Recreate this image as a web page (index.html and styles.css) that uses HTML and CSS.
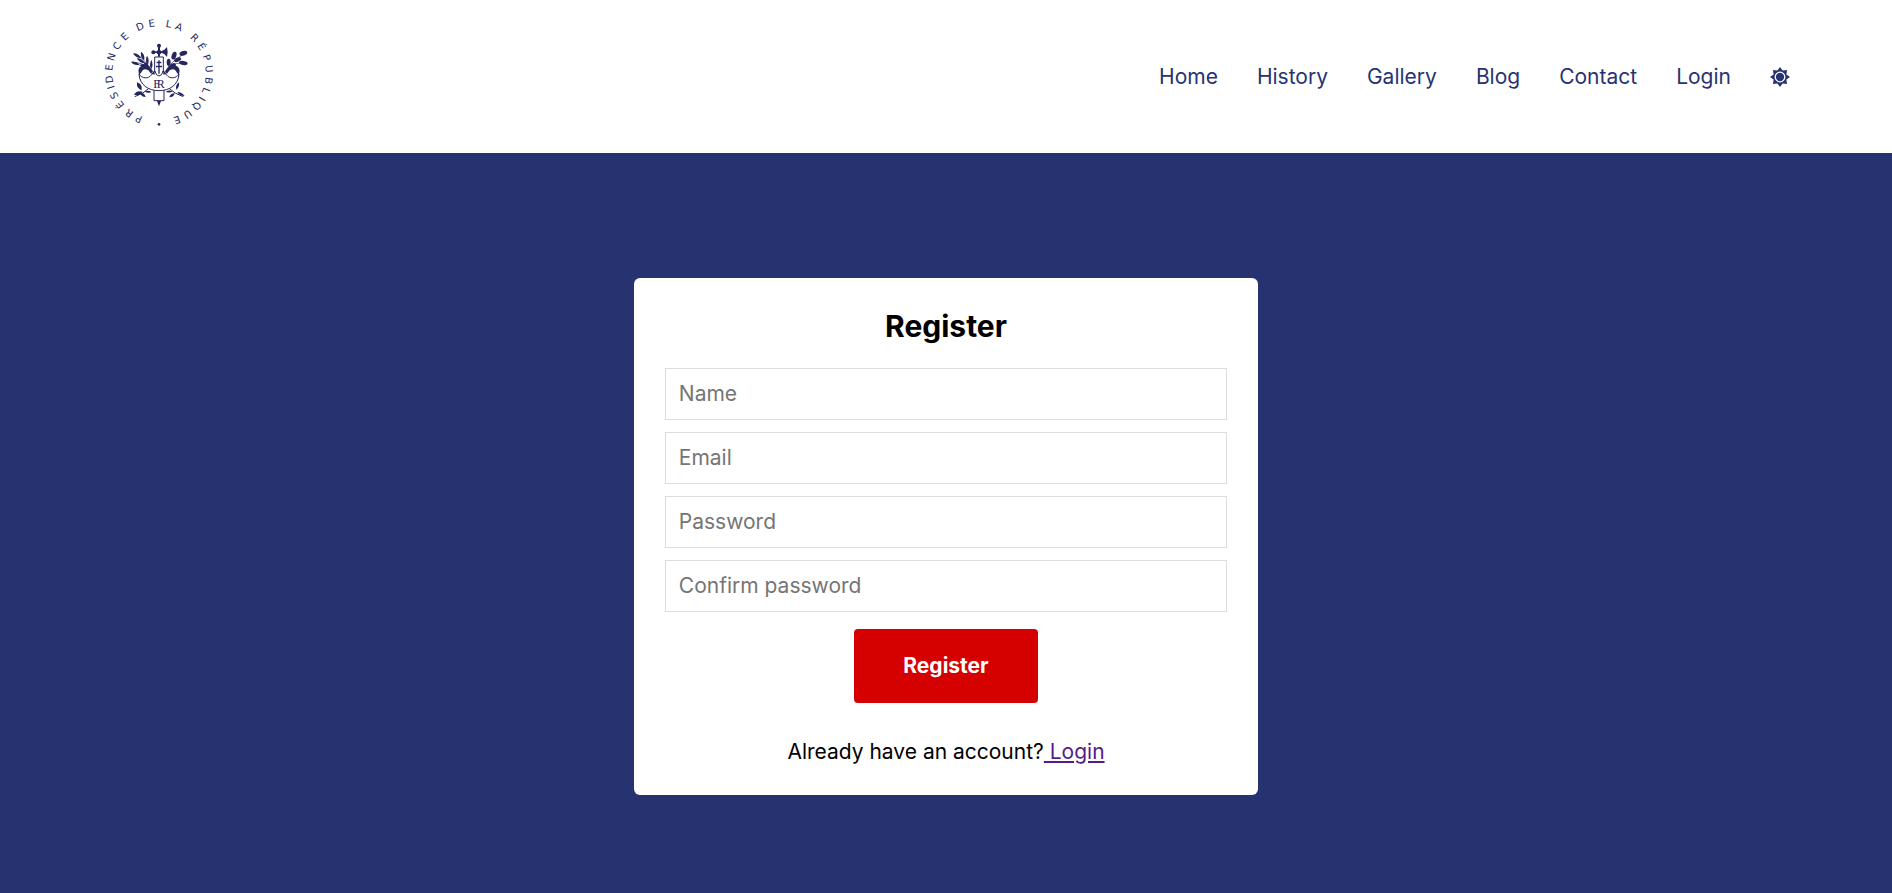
FILE: index.html
```html
<!DOCTYPE html>
<html lang="en">
<head>
<meta charset="utf-8">
<meta name="viewport" content="width=device-width, initial-scale=1">
<title>Register</title>
<link rel="stylesheet" href="styles.css">
</head>
<body>
<header class="header">
  <a class="logo" href="#" aria-label="Présidence de la République">
    <svg class="logo-mark" viewBox="36 38 342 351" fill="none" stroke="#25265e" stroke-width="3">
      <defs>
        <path id="ring" d="M207 343A140 140 0 0 1 207 63A140 140 0 0 1 207 343"/>
      </defs>
      <text class="logo-text"><textPath href="#ring"><tspan x="58 89 124 155 179 202 235 266 300 334">PRÉSIDENCE</tspan><tspan x="385 419">DE</tspan><tspan x="467 497">LA</tspan><tspan x="550 582 616 648 681 710 735 760 794 828">RÉPUBLIQUE</tspan></textPath></text>
      <circle cx="207" cy="357" r="4" fill="#25265e" stroke="none"/>
      <!-- laurel branch -->
      <path d="M137 146q35 20 49 54M126 171q30 0 52 17" stroke-width="2"/>
      <g fill="#25265e" stroke="none">
        <path d="M129 144q18 0 24 15-17-1-24-15zM153 139q14 9 9 26-12-9-9-26zM171 151q9 13 2 28-9-13-2-28zM184 163q7 15 0 28-8-12 0-28zM123 169q15-3 26 9-17 4-26-9zM140 159q17 0 25 15-16 0-25-15zM148 180q13-8 25 1-11 9-25-1zM160 169q14 4 17 16-14-2-17-16z"/>
      </g>
      <!-- oak branch -->
      <path d="M228 200q11-30 55-55M234 186q25-16 52-14" stroke-width="2"/>
      <g fill="#25265e" stroke="none">
        <ellipse cx="280" cy="144" rx="12" ry="7" transform="rotate(-18 280 144)"/>
        <ellipse cx="252" cy="151" rx="7" ry="12" transform="rotate(18 252 151)"/>
        <ellipse cx="263" cy="163" rx="11" ry="6" transform="rotate(-25 263 163)"/>
        <ellipse cx="280" cy="173" rx="13" ry="6" transform="rotate(10 280 173)"/>
        <ellipse cx="236" cy="171" rx="6" ry="11"/>
        <ellipse cx="249" cy="180" rx="9" ry="6" transform="rotate(-20 249 180)"/>
      </g>
      <!-- lower branches -->
      <path d="M134 274q26-8 44-26M280 274q-26-8-44-26" stroke-width="3"/>
      <g fill="#25265e" stroke="none">
        <path d="M141 231q17 5 14 24-17-6-14-24zM132 268q8-14 26-9-8 14-26 9zM151 262q13 0 16 13-14 0-16-13zM164 258q11-5 20 2-11 6-20-2z"/>
        <path d="M267 231q2 15-8 22-4-13 8-22zM284 272q-9-12-22-12 6 12 22 12zM254 264q-13 0-16 12 14 0 16-12zM248 258q-11-6-20 1 11 6 20-1z"/>
      </g>
      <!-- fasces -->
      <path d="M194 215v-60h26v60M192 250v36h30v-36" fill="#fff"/>
      <!-- shield -->
      <path d="M147 206c2 33 28 50 60 50s58-17 60-50c-8 14-28 15-36 4l-12-13q-3 15-12 15t-12-15l-12 13c-8 11-28 10-36-4z" fill="#fff"/>
      <path d="M184 205l10-10v13zM230 205l-10-10v13z" fill="#25265e" stroke="none"/>
      <!-- lion heads -->
      <path d="M147 208q-6-22 9-27 13-5 23 3l10 14-6 7-8-10q-14-8-19 3-2 6-9 10zM267 208q6-22-9-27-13-5-23 3l-10 14 6 7 8-10q14-8 19 3 2 6 9 10z" fill="#25265e" stroke="none"/>
      <!-- spearhead and axe -->
      <g fill="#25265e" stroke="none">
        <circle cx="207" cy="121" r="6"/>
        <path d="M204 120h6v34h-6zM190 138h34v5h-34z"/>
        <circle cx="190" cy="141" r="6"/>
        <circle cx="207" cy="141" r="7"/>
        <path d="M215 137l8-4 8-8q4 15 0 30l-8-9-8-3z"/>
        <path d="M205 165h4v40h-4zM200 169h14v5h-14zM198 181h18v5h-18z"/>
        <path d="M201 287h12l-3 8-3 8-3-8z"/>
      </g>
      <text class="monogram" x="200" y="247">F</text>
      <text class="monogram" x="212" y="247">R</text>
    </svg>
  </a>
  <nav class="nav">
    <a href="#">Home</a>
    <a href="#">History</a>
    <a href="#">Gallery</a>
    <a href="#">Blog</a>
    <a href="#">Contact</a>
    <a href="#">Login</a>
    <button class="theme" type="button" aria-label="Toggle theme">
      <svg viewBox="0 0 20 20" width="20" height="20">
        <path fill="#273371" d="M10 0l2.6 3.6L17 3l-.6 4.4L20 10l-3.6 2.6L17 17l-4.4-.6L10 20l-2.6-3.6L3 17l.6-4.4L0 10l3.6-2.6L3 3l4.4.6z"/>
        <circle cx="10" cy="10" r="4.8" fill="#273371" stroke="#fff" stroke-width="1.3"/>
      </svg>
    </button>
  </nav>
</header>
<main class="main">
  <form class="card">
    <h1 class="title">Register</h1>
    <div class="fields">
      <input class="field" type="text" placeholder="Name" aria-label="Name">
      <input class="field" type="email" placeholder="Email" aria-label="Email">
      <input class="field" type="password" placeholder="Password" aria-label="Password">
      <input class="field" type="password" placeholder="Confirm password" aria-label="Confirm password">
    </div>
    <button class="submit" type="submit">Register</button>
    <p class="switch">Already have an account?<a href="#"> Login</a></p>
  </form>
</main>
</body>
</html>
```
FILE: styles.css
```css
* {
  box-sizing: border-box;
}

body {
  display: flex;
  flex-direction: column;
  min-height: 100vh;
  margin: 0;
  background: #273371;
  color: #000;
  font-family: Inter, "Liberation Sans", sans-serif;
  font-size: 21px;
  line-height: 24px;
}

.header {
  display: flex;
  align-items: center;
  justify-content: space-between;
  padding: 18px 102px;
  background: #fff;
}

.logo {
  display: block;
}

.logo-mark {
  display: block;
  width: 114px;
  height: 117px;
  overflow: visible;
}

.logo-text {
  fill: #25265e;
  stroke: none;
  font-family: "DejaVu Sans", sans-serif;
  font-size: 30px;
  text-anchor: middle;
}

.monogram {
  fill: #25265e;
  stroke: none;
  font-family: "Liberation Serif", serif;
  font-size: 36px;
  text-anchor: middle;
}

.nav {
  display: flex;
  align-items: center;
  gap: 39px;
}

.nav a {
  color: #273371;
  text-decoration: none;
}

.theme {
  display: flex;
  padding: 0;
  border: 0;
  background: none;
}

.main {
  display: flex;
  flex: 1;
  align-items: flex-start;
  justify-content: center;
  padding: 125px 0 98px;
}

.card {
  display: flex;
  flex-direction: column;
  align-items: center;
  width: 33%;
  min-width: 480px;
  padding: 31px;
  border-radius: 6px;
  background: #fff;
}

.title {
  margin: 0 0 25px;
  font-size: 30px;
  font-weight: 700;
  line-height: 34px;
}

.fields {
  display: flex;
  flex-direction: column;
  gap: 12px;
  width: 100%;
}

.field {
  width: 100%;
  padding: 13px;
  border: 1px solid #ddd;
  border-radius: 0;
  background: #fff;
  font: inherit;
}

.field::placeholder {
  color: #757575;
}

.submit {
  margin: 17px 0 37px;
  padding: 25px 49px;
  border: 0;
  border-radius: 4px;
  background: #d50000;
  color: #fff;
  font: inherit;
  font-weight: 700;
}

.switch {
  margin: 0;
}

.switch a {
  color: #551a8b;
  text-decoration: underline;
  white-space: pre-wrap;
}
```
